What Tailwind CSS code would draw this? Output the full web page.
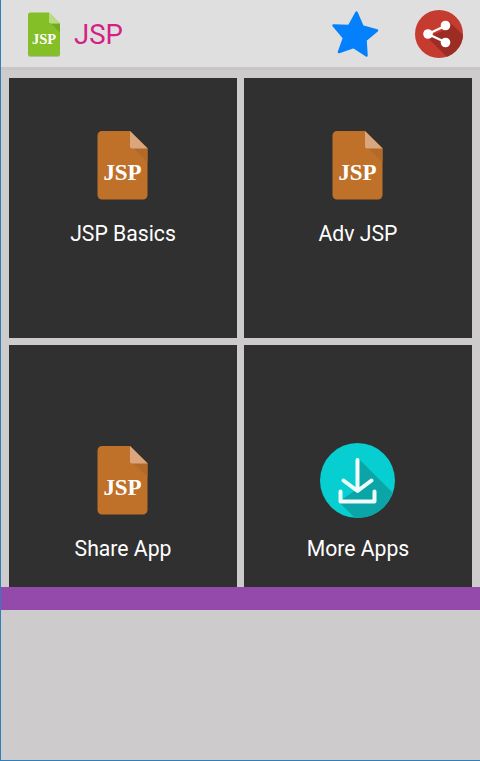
<!DOCTYPE html>
<html lang="en">
<head>
  <meta charset="UTF-8">
  <meta name="viewport" content="width=device-width, initial-scale=1.0">
  <script src="https://cdn.jsdelivr.net/npm/@tailwindcss/browser@4"></script>
  <title>JSP</title>
</head>
<body class="font-['Roboto',sans-serif]">
  <!-- file icon, shared by the tiles -->
  <svg class="hidden">
    <symbol id="jsp-file" viewBox="0 0 51 70">
      <path d="M5 1H33L50.500 18V65a4.500 4.500 0 0 1-4.500 4.500H5A4.500 4.500 0 0 1 .5 65V5.500A4.500 4.500 0 0 1 5 1z" fill="#bf7129"/>
      <path d="M36 18H50.500V32z" fill="#b2692a"/>
      <path d="M33 1L50.500 18.500H35a2 2 0 0 1-2-2z" fill="#daa67d"/>
      <text x="25.500" y="50" text-anchor="middle" textLength="38" font-family="Liberation Serif, serif" font-weight="bold" font-size="23" fill="#fff">JSP</text>
    </symbol>
  </svg>

  <div class="flex flex-col w-[480px] h-[761px] border-l border-b border-[#2f7fbd] bg-[#cecbcd] overflow-hidden">
    <header class="flex items-center h-[67px] shrink-0 bg-[#dfdfdf] pl-[27px] pr-[17px] shadow-[0_3px_0_#c9c6ca]">
      <svg class="w-[33px] h-[46px]" viewBox="0 0 33 46">
        <path d="M2.500 2.500H21L32 13V43.500a2.500 2.500 0 0 1-2.500 2.500H2.500A2.500 2.500 0 0 1 0 43.500V5A2.500 2.500 0 0 1 2.500 2.500z" fill="#b4b8ae"/>
        <path d="M2.500 1.500H21L32 12.500V42.500a2.500 2.500 0 0 1-2.500 2.500H2.500A2.500 2.500 0 0 1 0 42.500V4A2.500 2.500 0 0 1 2.500 1.500z" fill="#84bf27"/>
        <path d="M23 12.500H32V21.500z" fill="#74aa22"/>
        <path d="M21 1.500L32 12.500H23a2 2 0 0 1-2-2z" fill="#b8dc82"/>
        <text x="16" y="33" text-anchor="middle" textLength="24" font-family="Liberation Serif, serif" font-weight="bold" font-size="14.500" fill="#fff">JSP</text>
      </svg>
      <h1 class="ml-[13px] mt-[2px] text-[27.500px] leading-8 text-[#d51f86]">JSP</h1>
      <svg class="ml-auto w-[48px] h-[48px]" viewBox="0 0 48 48">
        <path d="M25.500 2.500L31.500 16.500L46 20.500L34.500 30L35.500 45.500L22.500 37L8 42L13 28L2.500 15.500L18 16z" fill="#0480fd" stroke="#0480fd" stroke-width="2.500" stroke-linejoin="round"/>
      </svg>
      <svg class="ml-[36px] w-[48px] h-[48px]" viewBox="0 0 48 48">
        <clipPath id="share-disc"><circle cx="24" cy="24" r="24"/></clipPath>
        <g clip-path="url(#share-disc)">
          <rect width="48" height="48" fill="#c63b2f"/>
          <path d="M34 11.500L52 29V54H39L12 27L30 20z" fill="#9b2d25"/>
        </g>
        <path d="M31 15.500L13 24L31 32.500" fill="none" stroke="#fff" stroke-width="2.200"/>
        <circle cx="30.500" cy="15.500" r="4.800" fill="#fff"/>
        <circle cx="13" cy="24" r="4.800" fill="#fff"/>
        <circle cx="30.500" cy="32.500" r="4.800" fill="#fff"/>
      </svg>
    </header>

    <main class="grid grid-cols-[228px_228px] grid-rows-[260px_242px] gap-[7px] pt-[11px] pl-2 text-[21.200px] text-white">
      <div class="flex flex-col items-center bg-[#303030] pt-[52px]">
        <svg class="w-[51px] h-[70px] mr-[2px]"><use href="#jsp-file"/></svg>
        <p class="mt-[20px] leading-7">JSP Basics</p>
      </div>
      <div class="flex flex-col items-center bg-[#303030] pt-[52px]">
        <svg class="w-[51px] h-[70px] mr-[2px]"><use href="#jsp-file"/></svg>
        <p class="mt-[20px] leading-7">Adv JSP</p>
      </div>
      <div class="flex flex-col items-center bg-[#303030] pt-[100px]">
        <svg class="w-[51px] h-[70px] mr-[2px]"><use href="#jsp-file"/></svg>
        <p class="mt-[20px] leading-7">Share App</p>
      </div>
      <div class="flex flex-col items-center bg-[#303030] pt-[98px]">
        <svg class="w-[75px] h-[75px] mr-[2px]" viewBox="0 0 75 75">
          <clipPath id="download-disc"><circle cx="37.500" cy="37.500" r="37.500"/></clipPath>
          <g clip-path="url(#download-disc)">
            <rect width="75" height="75" fill="#06ced1"/>
            <path d="M39 16L75 52V75H35L19 59L37 46z" fill="#0ba4a7"/>
          </g>
          <path d="M37.500 17V47M23.500 37.500L37.500 48L51.500 37.500M20.500 48.500V58.500H54.500V48.500" fill="none" stroke="#effcfc" stroke-width="4" stroke-linecap="round" stroke-linejoin="round"/>
        </svg>
        <p class="mt-[17px] leading-7">More Apps</p>
      </div>
    </main>

    <div class="h-[23px] shrink-0 bg-[#944aab]"></div>
  </div>
</body>
</html>
